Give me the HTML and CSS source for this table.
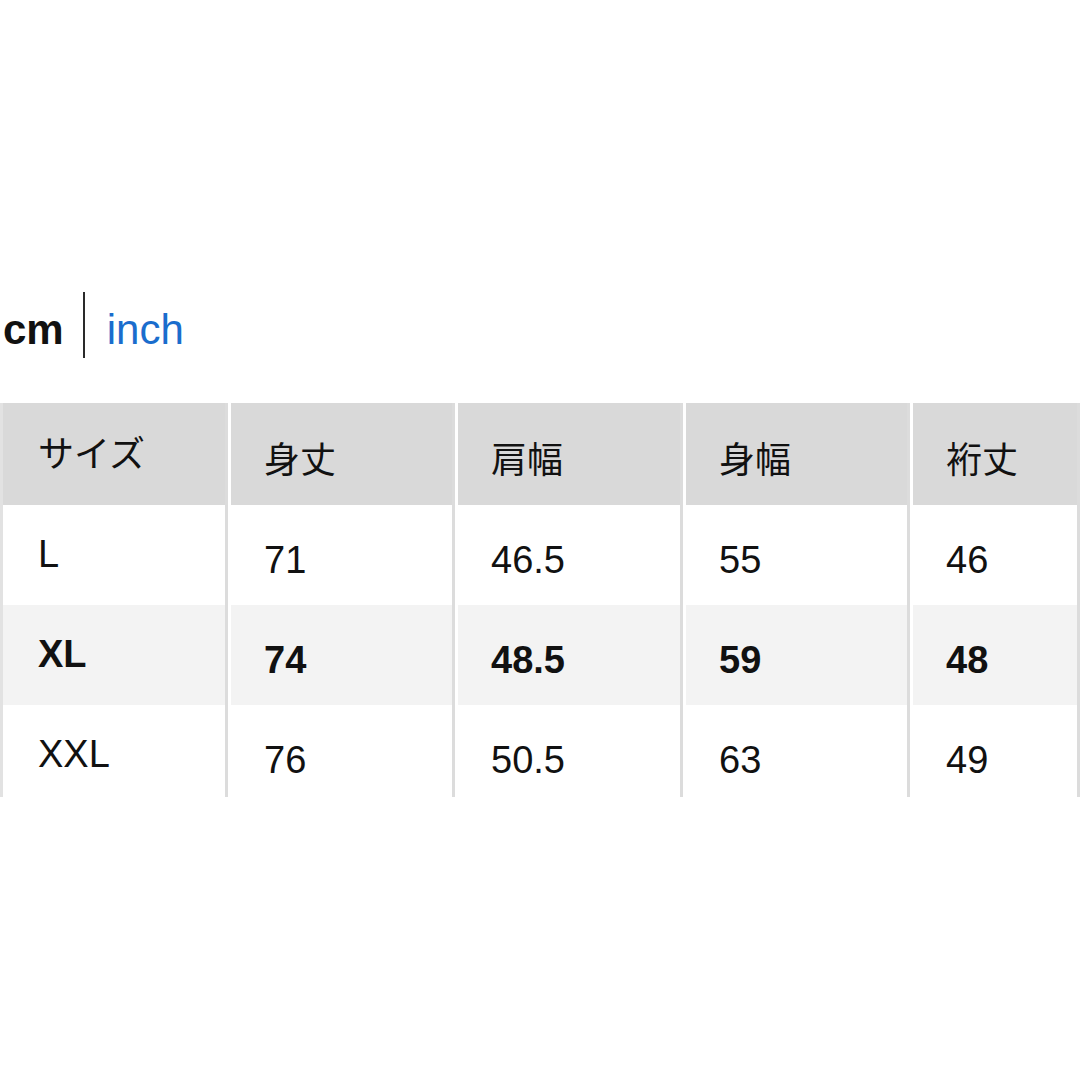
FILE: index.html
```html
<!DOCTYPE html>
<html lang="ja">
<head>
<meta charset="utf-8">
<title>サイズ表</title>
<link rel="stylesheet" href="styles.css">
</head>
<body>
<div class="page">
  <div class="units">
    <span class="unit unit-active">cm</span>
    <span class="unit-divider"></span>
    <span class="unit unit-link">inch</span>
  </div>
  <div class="table">
    <div class="row row-head">
      <div class="cell first">サイズ</div>
      <div class="cell">身丈</div>
      <div class="cell">肩幅</div>
      <div class="cell">身幅</div>
      <div class="cell">裄丈</div>
    </div>
    <div class="row">
      <div class="cell first">L</div>
      <div class="cell">71</div>
      <div class="cell">46.5</div>
      <div class="cell">55</div>
      <div class="cell">46</div>
    </div>
    <div class="row row-selected">
      <div class="cell first">XL</div>
      <div class="cell">74</div>
      <div class="cell">48.5</div>
      <div class="cell">59</div>
      <div class="cell">48</div>
    </div>
    <div class="row">
      <div class="cell first">XXL</div>
      <div class="cell">76</div>
      <div class="cell">50.5</div>
      <div class="cell">63</div>
      <div class="cell">49</div>
    </div>
  </div>
</div>
</body>
</html>
```
FILE: styles.css
```css
html, body {
  margin: 0;
  padding: 0;
  background: #ffffff;
}

body {
  width: 1080px;
  height: 1080px;
  overflow: hidden;
  font-family: "Liberation Sans", "Noto Sans CJK JP", sans-serif;
  color: #111111;
}

.page {
  padding-top: 292px;
}

.units {
  display: flex;
  align-items: flex-start;
  height: 66px;
  padding-left: 3px;
}

.unit {
  font-size: 42px;
  line-height: 42px;
  margin-top: 17px;
}

.unit-active {
  font-weight: 700;
  color: #111111;
}

.unit-link {
  color: #1a6dcd;
}

.unit-divider {
  width: 2px;
  height: 66px;
  background: #2a2a2a;
  margin: 0 22px 0 19px;
}

.table {
  margin-top: 45px;
  height: 394px;
  overflow: hidden;
}

.row {
  display: grid;
  grid-template-columns: 228px 227px 228px 227px 170px;
  height: 100px;
  background: #ffffff;
}

.row-head {
  height: 102px;
  background: #d9d9d9;
}

.row-selected {
  background: #f3f3f3;
  font-weight: 700;
}

.cell {
  box-sizing: border-box;
  height: 100%;
  font-size: 38px;
  line-height: 38px;
  padding: 36px 0 0 33px;
  border-left: 3px solid #ffffff;
  border-right: 3px solid #dcdcdc;
  white-space: nowrap;
}

.cell.first {
  border-left: 3px solid #e2e2e2;
  padding-top: 30px;
  padding-left: 35px;
}

.row-head .cell {
  font-size: 36px;
  padding-top: 39px;
}

.row-head .cell.first {
  padding-top: 33px;
}
```
